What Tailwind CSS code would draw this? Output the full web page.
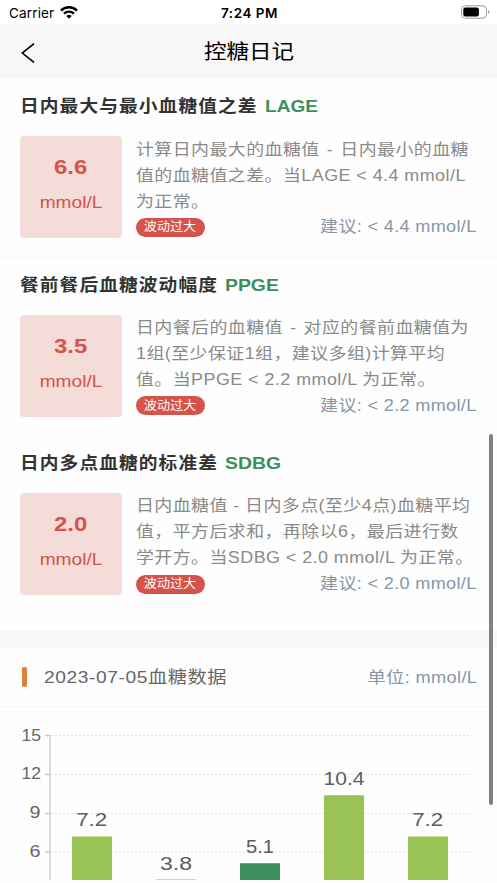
<!DOCTYPE html>
<html lang="zh-CN">
<head>
<meta charset="utf-8">
<title>控糖日记</title>
<script src="https://cdn.jsdelivr.net/npm/@tailwindcss/browser@4"></script>
</head>
<body class="h-[883px] w-[497px] overflow-hidden bg-[#fefefe] font-['Liberation_Sans','Noto_Sans_CJK_SC',sans-serif]">
<div class="relative flex h-[883px] flex-col whitespace-nowrap">
  <div class="grid h-6 shrink-0 grid-cols-3 items-center bg-white pr-[7px] pl-[9px] font-['Inter',sans-serif] text-[13.5px] text-black">
    <div class="flex items-center gap-[6px] pt-0.5"><span class="tracking-[0.15px]">Carrier</span>
      <svg class="-mt-0.5 h-[13px] w-[18px]" viewBox="0 0 18 13" fill="none" stroke="#000"><path d="M1 4.6a11.4 11.4 0 0 1 16 0" stroke-width="2.5"/><path d="M4 7.7a7.2 7.2 0 0 1 10 0" stroke-width="2.3"/><path d="M6.3 10.1a3.9 3.9 0 0 1 5.4 0L9 12.8z" fill="#000" stroke="none"/></svg>
    </div>
    <div class="pt-0.5 text-center font-semibold tracking-[0.5px]">7:24 PM</div>
    <svg class="h-[14px] w-[29px] justify-self-end" viewBox="0 0 29 14"><rect x=".5" y=".8" width="25" height="12.4" rx="3.6" fill="none" stroke="#999"/><rect x="2.3" y="2.6" width="15.6" height="8.8" rx="2" fill="#000"/><path d="M27.1 5v4q1.3-.5 1.3-2t-1.3-2" fill="#999"/></svg>
  </div>
  <header class="relative flex h-[54px] shrink-0 items-center justify-center bg-[#f7f7f7] pt-[2px] text-black">
    <svg class="absolute left-[21px] top-[19px] h-5 w-[14px]" viewBox="0 0 14 20" fill="none" stroke="#000" stroke-width="1.6"><path d="M13 .7 1.3 10.1 13 19.3"/></svg>
    <h1 class="scale-x-[1.1] text-[20.5px]">控糖日记</h1>
  </header>

  <main class="flex flex-col">
    <section class="h-[178.5px] border-b border-[#f8f8f8] pr-[20px] pl-[20px]">
      <h2 class="flex h-[58px] items-center text-[17px] font-bold text-[#333]"><span class="w-[244.5px]"><span class="inline-block origin-left scale-x-[1.1] tracking-[1px]">日内最大与最小血糖值之差</span></span><span class="origin-left scale-x-[1.12] text-[#3a8f5c]">LAGE</span></h2>
      <div class="flex">
        <div class="mr-[14px] flex h-[102px] w-[102px] flex-col items-center rounded-[4px] bg-[#f4dcd8] pt-[15px] text-[#d5534a]"><b class="scale-x-[1.14] text-[21px] leading-[32px]">6.6</b><span class="mt-[6px] scale-x-[1.16] text-[16.5px] leading-[26px]">mmol/L</span></div>
        <div class="flex flex-1 flex-col text-[16px] leading-[26px] text-[#8a8a8a]">
          <p class="w-[296px] origin-left translate-y-[0.5px] scale-x-[1.12] tracking-[0.4px]">计算日内最大的血糖值<span class="[word-spacing:1.5px]"> - </span>日内最小的血糖<br>值的血糖值之差。当LAGE &lt; 4.4 mmol/L<br>为正常。</p>
          <div class="flex items-center justify-between"><span class="flex h-[19px] w-[69px] items-center justify-center rounded-full bg-[#d5534a] text-[12px] text-white"><span class="scale-x-[1.09]">波动过大</span></span><span class="origin-right scale-x-[1.13] tracking-[0.3px] text-[#8796a5]">建议: &lt; 4.4 mmol/L</span></div>
        </div>
      </div>
    </section>
    <section class="h-[178.5px] pr-[20px] pl-[20px]">
      <h2 class="flex h-[58px] items-center text-[17px] font-bold text-[#333]"><span class="w-[204.5px]"><span class="inline-block origin-left scale-x-[1.1] tracking-[1px]">餐前餐后血糖波动幅度</span></span><span class="origin-left scale-x-[1.14] text-[#3a8f5c]">PPGE</span></h2>
      <div class="flex">
        <div class="mr-[14px] flex h-[102px] w-[102px] flex-col items-center rounded-[4px] bg-[#f4dcd8] pt-[15px] text-[#d5534a]"><b class="scale-x-[1.14] text-[21px] leading-[32px]">3.5</b><span class="mt-[6px] scale-x-[1.16] text-[16.5px] leading-[26px]">mmol/L</span></div>
        <div class="flex flex-1 flex-col text-[16px] leading-[26px] text-[#8a8a8a]">
          <p class="w-[296px] origin-left scale-x-[1.12] tracking-[0.4px]">日内餐后的血糖值<span class="[word-spacing:1.5px]"> - </span>对应的餐前血糖值为<br>1组(至少保证1组，建议多组)计算平均<br>值。当PPGE &lt; 2.2 mmol/L 为正常。</p>
          <div class="flex items-center justify-between"><span class="flex h-[19px] w-[69px] items-center justify-center rounded-full bg-[#d5534a] text-[12px] text-white"><span class="scale-x-[1.09]">波动过大</span></span><span class="origin-right scale-x-[1.13] tracking-[0.3px] text-[#8796a5]">建议: &lt; 2.2 mmol/L</span></div>
        </div>
      </div>
    </section>
    <section class="h-[178.5px] border-b border-[#f8f8f8] pr-[20px] pl-[20px]">
      <h2 class="flex h-[58px] items-center text-[17px] font-bold text-[#333]"><span class="w-[204.5px]"><span class="inline-block origin-left scale-x-[1.1] tracking-[1px]">日内多点血糖的标准差</span></span><span class="origin-left scale-x-[1.14] text-[#3a8f5c]">SDBG</span></h2>
      <div class="flex">
        <div class="mr-[14px] flex h-[102px] w-[102px] flex-col items-center rounded-[4px] bg-[#f4dcd8] pt-[15px] text-[#d5534a]"><b class="scale-x-[1.14] text-[21px] leading-[32px]">2.0</b><span class="mt-[6px] scale-x-[1.16] text-[16.5px] leading-[26px]">mmol/L</span></div>
        <div class="flex flex-1 flex-col text-[16px] leading-[26px] text-[#8a8a8a]">
          <p class="w-[296px] origin-left scale-x-[1.12] tracking-[0.4px]">日内血糖值 - 日内多点(至少4点)血糖平均<br>值，平方后求和，再除以6，最后进行数<br>学开方。当SDBG &lt; 2.0 mmol/L 为正常。</p>
          <div class="flex items-center justify-between"><span class="flex h-[19px] w-[69px] items-center justify-center rounded-full bg-[#d5534a] text-[12px] text-white"><span class="scale-x-[1.09]">波动过大</span></span><span class="origin-right scale-x-[1.13] tracking-[0.3px] text-[#8796a5]">建议: &lt; 2.0 mmol/L</span></div>
        </div>
      </div>
    </section>
  </main>
  <div class="mt-[16.5px] h-[18px] shrink-0 bg-[#f7f7f7]"></div>
  <div class="flex h-[59px] shrink-0 items-center border-b border-[#f6f6f6] pr-[20px] pl-[22px]">
    <i class="mr-[17px] h-5 w-[5px] rounded-[2px] bg-[#e07f3c]"></i>
    <span class="origin-left scale-x-[1.13] pt-[2px] text-[17px] tracking-[0.5px] text-[#666]">2023-07-05血糖数据</span>
    <span class="ml-auto origin-right scale-x-[1.14] pt-[2px] text-[16px] tracking-[0.3px] text-[#8796a5]">单位: mmol/L</span>
  </div>
  <svg class="block h-[173px] w-[497px] shrink-0" viewBox="0 707 497 173">
    <g stroke="#dedede" stroke-dasharray="2 2"><path d="M51 735.5H469M51 774.5H469M51 813.5H469M51 852H469"/></g>
    <path d="M45 735.5h5M45 774.5h5M45 813.5h5M45 852h5M50 735v146" stroke="#ccc" stroke-width="1.4" fill="none"/>
    <g fill="#9ac356"><path d="M72 836.5h40v50H72zM324 795.3h40v90h-40zM408 836.5h40v50h-40z"/></g>
    <path d="M156 879.4h40v5h-40z" fill="#80b8ac"/><path d="M240 863.3h40v20h-40z" fill="#3a8f5c"/>
    <g fill="#666" font-size="16.5">
      <text x="21.5" y="740.5" textLength="19.5" lengthAdjust="spacingAndGlyphs">15</text>
      <text x="21.5" y="779.3" textLength="19.5" lengthAdjust="spacingAndGlyphs">12</text>
      <text x="29.5" y="818.2" textLength="11" lengthAdjust="spacingAndGlyphs">9</text>
      <text x="29.5" y="857" textLength="11" lengthAdjust="spacingAndGlyphs">6</text>
    </g>
    <g fill="#5c5c5c" font-size="18.5">
      <text x="76.2" y="826" textLength="31" lengthAdjust="spacingAndGlyphs">7.2</text>
      <text x="160" y="869.5" textLength="32" lengthAdjust="spacingAndGlyphs">3.8</text>
      <text x="246" y="853" textLength="28" lengthAdjust="spacingAndGlyphs">5.1</text>
      <text x="323.5" y="784.5" textLength="41" lengthAdjust="spacingAndGlyphs">10.4</text>
      <text x="412.2" y="826" textLength="31" lengthAdjust="spacingAndGlyphs">7.2</text>
    </g>
  </svg>
  <div class="absolute top-[434px] left-[489px] h-[371px] w-1 rounded-full bg-[#808080]"></div>
</div>
</body>
</html>
